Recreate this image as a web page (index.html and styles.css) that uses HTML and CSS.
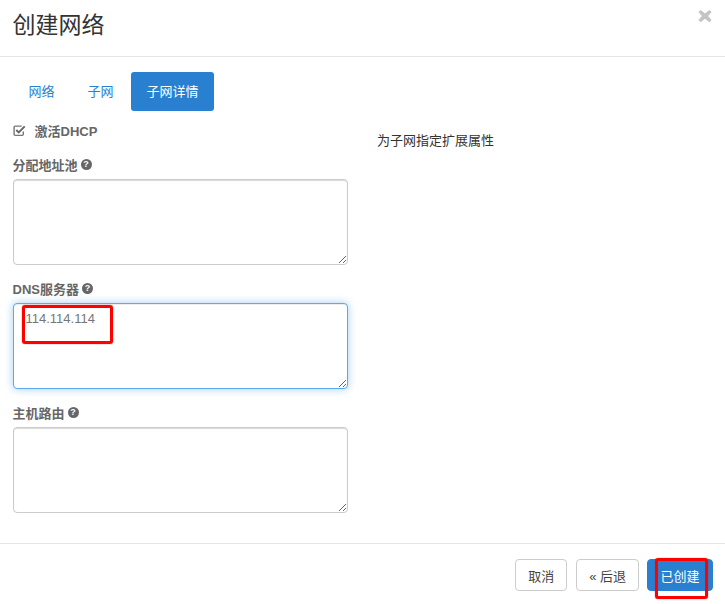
FILE: index.html
```html
<!DOCTYPE html>
<html lang="zh-CN">
<head>
    <meta charset="UTF-8">
    <title>创建网络</title>
    <link rel="stylesheet" href="styles.css">
</head>
<body>
    <div class="modal">
        <!-- Cabecera -->
        <div class="modal-header">
            <h4 class="modal-title">创建网络</h4>
            <svg class="close-icon" width="14" height="14" viewBox="0 0 16 16">
                <path d="M3 1 L8 5 L13 1 L15.5 3.5 L11.5 8 L15.5 12.5 L13 15 L8 11 L3 15 L0.5 12.5 L4.5 8 L0.5 3.5 Z" fill="#c4c4c4"/>
            </svg>
        </div>

        <div class="modal-body">
            <ul class="tabs">
                <li class="tab">网络</li>
                <li class="tab">子网</li>
                <li class="tab active">子网详情</li>
            </ul>

            <div class="columns">
                <div class="form-col">
                    <div class="check-row">
                        <svg class="check-icon" width="13" height="13" viewBox="0 0 12 12">
                            <path d="M9.5 7 V9.5 A1 1 0 0 1 8.5 10.5 H2 A1 1 0 0 1 1 9.5 V3 A1 1 0 0 1 2 2 H8" fill="none" stroke="#777" stroke-width="1.3"/>
                            <path d="M3 5.5 L5.3 7.8 L10.8 2.2" fill="none" stroke="#666" stroke-width="1.8"/>
                        </svg>
                        <span>激活DHCP</span>
                    </div>

                    <div class="form-group">
                        <label class="field-label">分配地址池 <span class="help-icon">?</span></label>
                        <textarea class="field"></textarea>
                    </div>
                    <div class="form-group">
                        <label class="field-label">DNS服务器 <span class="help-icon">?</span></label>
                        <textarea class="field focused">114.114.114</textarea>
                    </div>
                    <div class="form-group">
                        <label class="field-label">主机路由 <span class="help-icon">?</span></label>
                        <textarea class="field"></textarea>
                    </div>
                </div>
                <p class="side-text">为子网指定扩展属性</p>
            </div>
        </div>

        <div class="modal-footer">
            <button class="btn">取消</button>
            <button class="btn">« 后退</button>
            <button class="btn btn-primary">已创建</button>
        </div>
    </div>

    <!-- Marcas rojas sobre la captura -->
    <div class="mark mark-dns"></div>
    <div class="mark mark-submit"></div>
</body>
</html>
```

FILE: styles.css
```css
html, body {
    margin: 0;
    height: 604px;
    overflow: hidden;
}

body {
    position: relative;
    background-color: #fff;
    font-family: "Liberation Sans", "Noto Sans CJK SC", sans-serif;
    font-size: 13px;
    color: #444;
}

.modal-header {
    height: 56px;
    padding: 0 13px 0 12.5px;
    display: flex;
    align-items: flex-start;
    justify-content: space-between;
    border-bottom: 1px solid #e5e5e5;
}

.modal-title {
    margin: 0;
    font-size: 23px;
    line-height: 50px;
    font-weight: 400;
    color: #333;
}

.close-icon {
    margin-top: 9px;
}

.modal-body {
    height: 486px;
    padding: 15px 13px 0;
    box-sizing: border-box;
}

.tabs {
    display: flex;
    gap: 2px;
    list-style: none;
    margin: 0;
    padding: 0;
}

.tab {
    padding: 0 15.5px;
    height: 39px;
    line-height: 39px;
    border-radius: 3px;
    color: #2a80d0;
    text-align: center;
}

.tab.active {
    background-color: #2980d0;
    color: #fff;
}

.columns {
    display: flex;
    gap: 29px;
}

.form-col {
    width: 335px;
}

.check-row {
    display: flex;
    align-items: center;
    gap: 9px;
    height: 20px;
    margin-top: 9px;
    font-weight: 700;
    color: #666;
}

.check-icon {
    margin-top: 1px;
    margin-left: -0.5px;
}

.form-group {
    margin-top: 14px;
}

.check-row + .form-group {
    margin-top: 15px;
}

.field-label {
    display: flex;
    align-items: center;
    gap: 3px;
    height: 18px;
    margin-left: -0.5px;
    margin-bottom: 6px;
    font-weight: 700;
    color: #666;
}

.help-icon {
    display: inline-block;
    width: 11px;
    height: 11px;
    line-height: 11px;
    border-radius: 50%;
    background-color: #666;
    color: #fff;
    font-size: 9px;
    text-align: center;
}

.field {
    display: block;
    width: 100%;
    height: 86px;
    box-sizing: border-box;
    padding: 6px 11.5px;
    border: 1px solid #ccc;
    border-radius: 4px;
    box-shadow: inset 0 1px 1px rgba(0, 0, 0, 0.15);
    outline: none;
    resize: vertical;
    font-family: inherit;
    font-size: 13px;
    line-height: 18px;
    color: #777;
}

.field.focused {
    border-color: #5aabee;
    box-shadow: inset 0 1px 1px rgba(0, 0, 0, 0.075), 0 0 8px rgba(102, 175, 233, 0.6);
}

.side-text {
    margin: 21px 0 0;
    line-height: 18px;
    color: #333;
}

.modal-footer {
    display: flex;
    justify-content: flex-end;
    gap: 9px;
    padding: 15px 12px;
    border-top: 1px solid #e5e5e5;
}

.btn {
    height: 32px;
    padding: 0 12px;
    border: 1px solid #ccc;
    border-radius: 4px;
    background-color: #fff;
    font-family: inherit;
    font-size: 13px;
    color: #444;
}

.btn-primary {
    margin-left: -1px;
    padding: 0 12.5px;
    border-color: #2980d0;
    background-color: #2980d0;
    color: #fff;
}

.mark {
    position: absolute;
    box-sizing: border-box;
    border: 3px solid #f00;
    border-radius: 3px;
    box-shadow: 0 0 1px #f00;
}

.mark-dns {
    left: 22px;
    top: 305px;
    width: 91px;
    height: 39px;
}

.mark-submit {
    left: 655px;
    top: 558px;
    width: 53px;
    height: 41px;
}
```
